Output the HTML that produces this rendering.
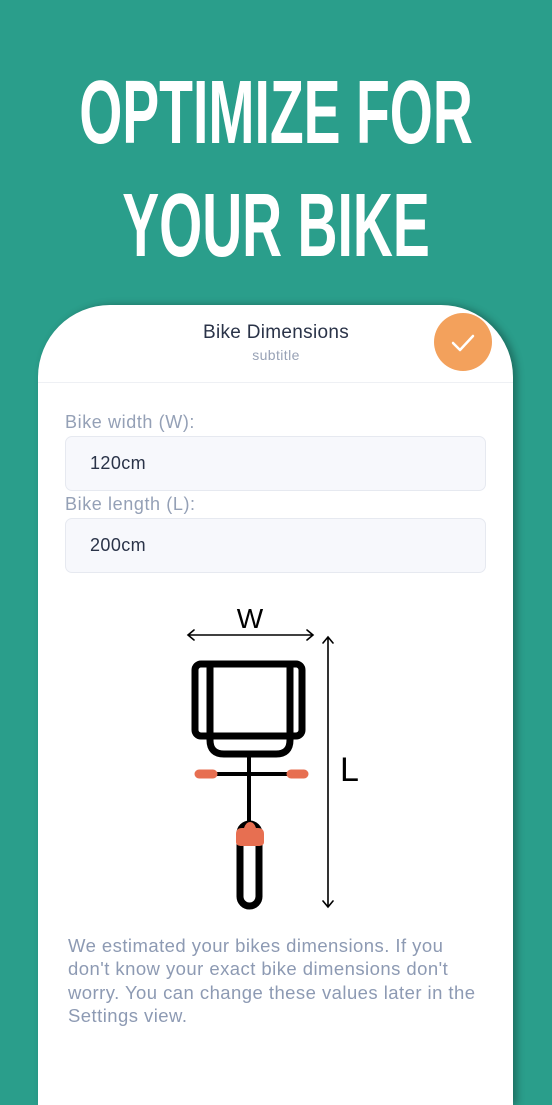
<!DOCTYPE html>
<html><head><style>
body{margin:0;width:552px;height:1029px;background:#2a9e8b;overflow:hidden;position:relative;font-family:"Liberation Sans",sans-serif}
.t{position:absolute;left:-100px;width:752px;text-align:center;color:#fff;font-family:"Liberation Sans",sans-serif;font-weight:bold;font-size:90px;line-height:1;white-space:nowrap;transform:scaleX(0.615)}
.card{position:absolute;left:38px;top:305px;width:475px;height:800px;background:#fff;border-radius:72px 72px 0 0;box-shadow:4px 0 8px rgba(0,0,0,0.3)}
.h1{position:absolute;top:322px;left:0;width:552px;text-align:center;font-size:19px;color:#2a3348;letter-spacing:0.3px}
.h2{position:absolute;top:347px;left:0;width:552px;text-align:center;font-size:14px;color:#98a2b6;letter-spacing:0.4px}
.ok{position:absolute;left:434px;top:313px;width:58px;height:58px;border-radius:50%;background:#f3a15c}
.line{position:absolute;left:38px;top:382px;width:475px;height:1px;background:#eef0f4}
.lab{position:absolute;left:65px;font-size:18px;color:#94a0b6;letter-spacing:0.6px}
.in{position:absolute;left:65px;width:421px;height:55px;background:#f7f8fc;border:1px solid #e6e9f0;border-radius:7px;box-sizing:border-box;padding-left:24px;line-height:53px;font-size:18px;color:#2a3348;letter-spacing:0.4px}
.p{position:absolute;left:68px;top:934px;width:412px;font-size:18.5px;line-height:23.3px;color:#8d9ab3;letter-spacing:0.45px}
</style></head><body>
<div class="t" style="top:68px">OPTIMIZE FOR</div>
<div class="t" style="top:181px">YOUR BIKE</div>
<div class="card"></div>
<div class="h1">Bike Dimensions</div>
<div class="h2">subtitle</div>
<div class="ok"><svg width="58" height="58"><path d="M19 30 L26 37 L39 23" fill="none" stroke="#fff" stroke-width="2.5" stroke-linecap="round" stroke-linejoin="round"/></svg></div>
<div class="line"></div>
<div class="lab" style="top:412px">Bike width (W):</div>
<div class="in" style="top:436px">120cm</div>
<div class="lab" style="top:494px">Bike length (L):</div>
<div class="in" style="top:518px">200cm</div>
<svg style="position:absolute;left:0;top:0" width="552" height="1029">
<text x="250" y="628" font-family="Liberation Sans" font-size="28" text-anchor="middle" fill="#000">W</text>
<text x="340" y="781" font-family="Liberation Sans" font-size="34" fill="#000">L</text>
<g fill="none" stroke="#000" stroke-width="1.6" stroke-linecap="round">
<path d="M188 635 H313 M194 630 L188 635 L194 640 M307 630 L313 635 L307 640"/>
<path d="M328 637 V907 M323 643 L328 637 L333 643 M323 901 L328 907 L333 901"/>
</g>
<g fill="none" stroke="#000" stroke-width="7" stroke-linejoin="round">
<rect x="195" y="664" width="107" height="72" rx="6"/>
<path d="M210 664 V740 Q210 754 224 754 H276 Q290 754 290 740 V664"/>
<rect x="240" y="824" width="19" height="82" rx="9.5"/>
</g>
<path d="M215 774 H290 M249 754 V826" stroke="#000" stroke-width="4"/>
<path d="M199 774 H213 M291 774 H304" stroke="#e76f51" stroke-width="9" stroke-linecap="round"/>
<path d="M236 834 Q236 828 242 828 L244 828 Q246 822 250 822 Q254 822 256 828 L258 828 Q264 828 264 834 L264 842 Q264 846 258 846 L242 846 Q236 846 236 842 Z" fill="#e76f51"/>
</svg>
<div class="p">We estimated your bikes dimensions. If you don't know your exact bike dimensions don't worry. You can change these values later in the Settings view.</div>
</body></html>
